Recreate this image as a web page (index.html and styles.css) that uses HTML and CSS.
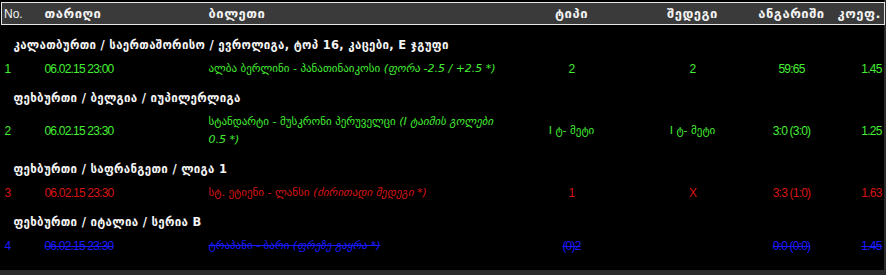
FILE: index.html
```html
<!DOCTYPE html>
<html lang="ka">
<head>
<meta charset="utf-8">
<title>ბილეთები</title>
<link rel="stylesheet" href="styles.css">
</head>
<body>
<div class="frame">
  <table class="bets">
    <colgroup>
      <col class="c-no"><col class="c-date"><col class="c-ticket"><col class="c-type"><col class="c-result"><col class="c-score"><col class="c-koef">
    </colgroup>
    <thead>
      <tr>
        <th class="l first num">No.</th>
        <th class="l">თარიღი</th>
        <th class="l">ბილეთი</th>
        <th class="c">ტიპი</th>
        <th class="c">შედეგი</th>
        <th class="c">ანგარიში</th>
        <th class="r last">კოეფ.</th>
      </tr>
    </thead>
    <tbody>
      <tr class="group"><td colspan="7">კალათბურთი / საერთაშორისო / ევროლიგა, ტოპ 16, კაცები, E ჯგუფი</td></tr>
      <tr class="row win">
        <td class="first">1</td>
        <td>06.02.15 23:00</td>
        <td class="ticket">ალბა ბერლინი - პანათინაიკოსი <i>(ფორა -2.5 / +2.5 *)</i></td>
        <td class="c">2</td>
        <td class="c">2</td>
        <td class="c">59:65</td>
        <td class="r last">1.45</td>
      </tr>
      <tr class="group"><td colspan="7">ფეხბურთი / ბელგია / იუპილერლიგა</td></tr>
      <tr class="row win">
        <td class="first">2</td>
        <td>06.02.15 23:30</td>
        <td class="ticket">სტანდარტი - მუსკრონი პერუველცი <i>(I ტაიმის გოლები</i> <i>0.5 *)</i></td>
        <td class="c ka">I ტ- მეტი</td>
        <td class="c ka">I ტ- მეტი</td>
        <td class="c">3:0 (3:0)</td>
        <td class="r last">1.25</td>
      </tr>
      <tr class="group"><td colspan="7">ფეხბურთი / საფრანგეთი / ლიგა 1</td></tr>
      <tr class="row lose">
        <td class="first">3</td>
        <td>06.02.15 23:30</td>
        <td class="ticket">სტ. ეტიენი - ლანსი <i>(ძირითადი შედეგი *)</i></td>
        <td class="c">1</td>
        <td class="c">X</td>
        <td class="c">3:3 (1:0)</td>
        <td class="r last">1.63</td>
      </tr>
      <tr class="group"><td colspan="7">ფეხბურთი / იტალია / სერია B</td></tr>
      <tr class="row void">
        <td class="first">4</td>
        <td><s>06.02.15 23:30</s></td>
        <td class="ticket"><s>ტრაპანი - ბარი <i>(ფრეზე გაყრა *)</i></s></td>
        <td class="c"><s>(0)2</s></td>
        <td class="c"></td>
        <td class="c"><s>0:0 (0:0)</s></td>
        <td class="r last"><s>1.45</s></td>
      </tr>
    </tbody>
  </table>
</div>
</body>
</html>
```
FILE: styles.css
```css
html, body {
  margin: 0;
  padding: 0;
  background: #2b2b2b;
}
body {
  width: 886px;
  height: 275px;
  overflow: hidden;
  font-family: "Liberation Sans", Arial, "DejaVu Sans", sans-serif;
  font-size: 12px;
}
.frame {
  width: 884px;
  height: 270px;
  background: #000;
  padding-top: 2px;
  box-sizing: border-box;
}
.bets {
  margin-left: 1px;
  width: 883px;
  border-collapse: collapse;
  table-layout: fixed;
}
.c-no { width: 43px; }
.c-date { width: 164px; }
.c-ticket { width: 304px; }
.c-type { width: 118px; }
.c-result { width: 124px; }
.c-score { width: 74px; }
.c-koef { width: 56px; }

th {
  background: #3a3a3a;
  color: #f2f2f2;
  font-family: "DejaVu Sans", sans-serif;
  font-weight: bold;
  font-size: 13px;
  letter-spacing: 0.5px;
  height: 21px;
  padding: 0;
  border-top: 1px solid #e6e6e6;
  border-bottom: 1px solid #e6e6e6;
  white-space: nowrap;
}
th.num {
  font-family: "Liberation Sans", Arial, sans-serif;
  font-weight: normal;
  font-size: 12px;
  letter-spacing: 0;
}
th.first { border-left: 1px solid #e6e6e6; }
th.last { border-right: 1px solid #e6e6e6; padding-right: 3px; letter-spacing: 0.5px; }
td { padding: 0; }
.l { text-align: left; }
.c { text-align: center; }
.r { text-align: right; }
.first { padding-left: 2px; }
.last { padding-right: 3px; }

.group td {
  color: #f4f4f4;
  font-family: "DejaVu Sans", sans-serif;
  font-weight: bold;
  font-size: 11.5px;
  letter-spacing: 0.3px;
  line-height: 24px;
  padding-top: 8px;
  padding-left: 12px;
}
.row td {
  line-height: 18px;
  padding-top: 3px;
  vertical-align: middle;
  letter-spacing: -0.8px;
}
.row td.ticket,
.row td.ka {
  font-family: "DejaVu Sans", sans-serif;
  font-size: 11px;
  letter-spacing: 0;
}
.row td.ticket { padding-right: 6px; }
.row td.first { padding-left: 3px; }
.row i { font-style: italic; }
.win td { color: #44ee33; }
.lose td { color: #d81414; }
.void td { color: #1a1aff; }
s { text-decoration: line-through; }
```
